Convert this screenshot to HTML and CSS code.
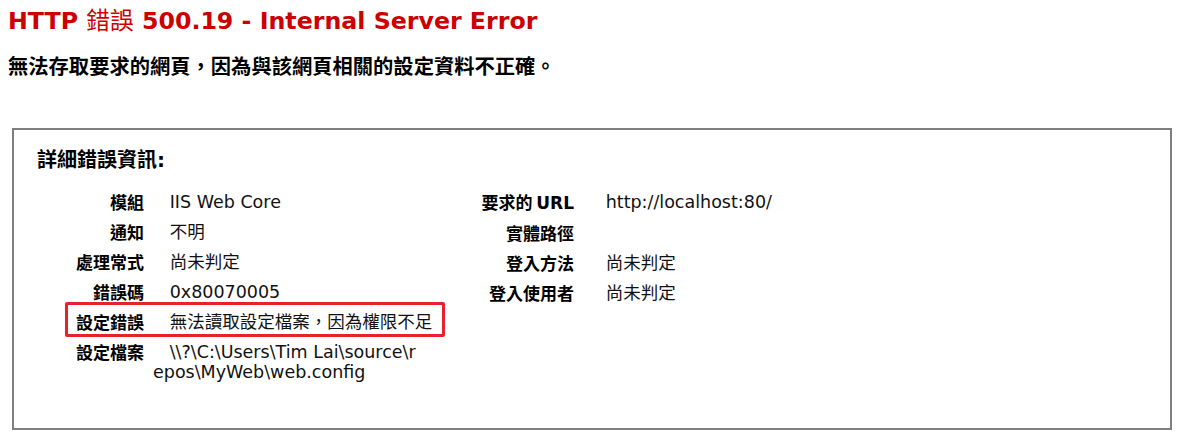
FILE: index.html
```html
<!DOCTYPE html>
<html lang="zh-Hant">
<head>
<meta charset="utf-8">
<title>IIS 10.0 詳細錯誤 - 500.19 - Internal Server Error</title>
<link rel="stylesheet" href="styles.css">
</head>
<body>
<h1 class="title">HTTP <span class="cjk-light">錯誤</span> 500.19 - Internal Server Error</h1>
<p class="subtitle">無法存取要求的網頁，因為與該網頁相關的設定資料不正確。</p>
<div class="box">
  <h3 class="box-head">詳細錯誤資訊:</h3>
  <div class="details">
    <div class="table left">
      <div class="row"><div class="label">模組</div><div class="value">&nbsp;&nbsp;&nbsp;IIS Web Core</div></div>
      <div class="row"><div class="label">通知</div><div class="value">&nbsp;&nbsp;&nbsp;不明</div></div>
      <div class="row"><div class="label">處理常式</div><div class="value">&nbsp;&nbsp;&nbsp;尚未判定</div></div>
      <div class="row"><div class="label">錯誤碼</div><div class="value">&nbsp;&nbsp;&nbsp;0x80070005</div></div>
      <div class="row highlight"><div class="label">設定錯誤</div><div class="value">&nbsp;&nbsp;&nbsp;無法讀取設定檔案，因為權限不足</div></div>
      <div class="row"><div class="label">設定檔案</div><div class="value wrap">&nbsp;&nbsp;&nbsp;\\?\C:\Users\Tim Lai\source\repos\MyWeb\web.config</div></div>
    </div>
    <div class="table right">
      <div class="row"><div class="label">要求的 <b>URL</b></div><div class="value">&nbsp;&nbsp;&nbsp;http://localhost:80/</div></div>
      <div class="row"><div class="label">實體路徑</div><div class="value"></div></div>
      <div class="row"><div class="label">登入方法</div><div class="value">&nbsp;&nbsp;&nbsp;尚未判定</div></div>
      <div class="row"><div class="label">登入使用者</div><div class="value">&nbsp;&nbsp;&nbsp;尚未判定</div></div>
    </div>
  </div>
</div>
</body>
</html>
```
FILE: styles.css
```css
html, body {
  background: #fff;
}
body {
  margin: 8px;
  font-family: "DejaVu Sans", Verdana, "Noto Sans CJK TC", sans-serif;
  color: #000;
}
.title {
  margin: 0;
  font-size: 23.7px;
  line-height: 27px;
  font-weight: bold;
  color: #cc0000;
}
.cjk-light {
  font-weight: normal;
}
.subtitle {
  margin: 19px 0 0 0;
  font-size: 20.3px;
  line-height: 26px;
  font-weight: bold;
}
.box {
  margin: 48px 0 0 4px;
  box-sizing: border-box;
  width: 1160px;
  height: 302px;
  border: 2px solid #7f7f7f;
  padding: 18px 0 0 23px;
}
.box-head {
  margin: 0;
  font-size: 20px;
  line-height: 24px;
  font-weight: bold;
}
.details {
  display: flex;
  margin-top: 15px;
}
.table {
  display: flex;
  flex-direction: column;
  align-items: flex-start;
}
.table.left {
  width: 420px;
  margin-left: 2px;
}
.row {
  display: grid;
  grid-template-columns: 105px 265px;
  column-gap: 9px;
  padding: 5px 0;
  font-size: 17px;
  line-height: 20px;
}
.right .row {
  grid-template-columns: 115px 300px;
  column-gap: 15px;
}
.label {
  text-align: right;
  font-family: "Noto Sans CJK TC", "DejaVu Sans", sans-serif;
  font-weight: bold;
}
.label b {
  font-family: "DejaVu Sans", sans-serif;
  font-weight: bold;
}
.value {
  color: #111;
  font-size: 17.5px;
  white-space: nowrap;
}
.wrap {
  white-space: normal;
  word-break: break-all;
}
.highlight {
  position: relative;
}
.highlight::before {
  content: "";
  position: absolute;
  left: 26px;
  width: 380px;
  top: -5px;
  bottom: 0;
  box-sizing: border-box;
  border: 3px solid #e8212b;
  border-radius: 2px;
}
```
